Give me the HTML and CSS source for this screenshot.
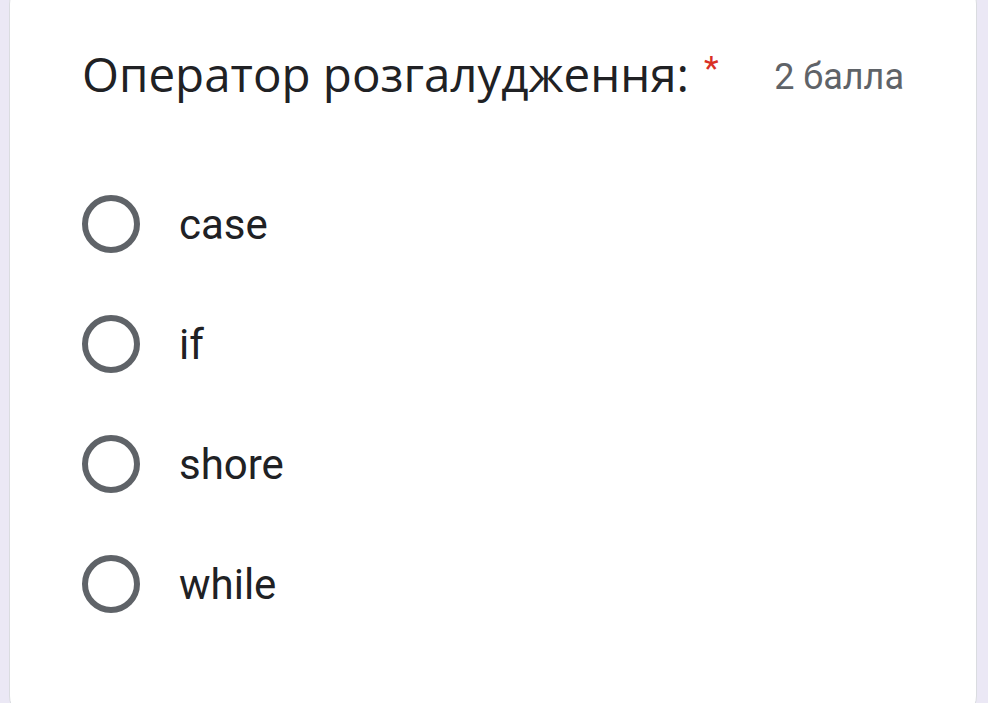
FILE: index.html
```html
<!DOCTYPE html>
<html lang="uk">
<head>
<meta charset="utf-8">
<link rel="stylesheet" href="styles.css">
</head>
<body>
<div class="card">
  <div class="header">
    <div class="title">Оператор розгалудження:<span class="req">*</span></div>
    <div class="points">2 балла</div>
  </div>
  <div class="options">
    <label class="option"><span class="radio"></span><span class="label">case</span></label>
    <label class="option"><span class="radio"></span><span class="label">if</span></label>
    <label class="option"><span class="radio"></span><span class="label">shore</span></label>
    <label class="option"><span class="radio"></span><span class="label">while</span></label>
  </div>
</div>
</body>
</html>
```
FILE: styles.css
```css
html, body {
  margin: 0;
  padding: 0;
}
body {
  background: #ebe8f5;
  height: 703px;
  overflow: hidden;
  font-family: Roboto, "Liberation Sans", sans-serif;
}
.card {
  box-sizing: border-box;
  margin: -20px 0 0 9px;
  width: 968px;
  height: 740px;
  background: #ffffff;
  border: 1px solid #dadce0;
  border-radius: 24px;
  padding: 60px 72px 0 72px;
}
.header {
  display: flex;
  align-items: baseline;
  justify-content: space-between;
}
.title {
  font-family: "Open Sans", Roboto, sans-serif;
  font-size: 47.5px;
  color: #202124;
}
.req {
  color: #d93025;
  margin-left: 15px;
  font-family: Roboto, sans-serif;
  font-size: 34px;
  position: relative;
  top: -12px;
}
.points {
  font-size: 36px;
  color: #5f6368;
  position: relative;
  top: -3px;
}
.options {
  display: flex;
  flex-direction: column;
  margin-top: 89px;
  gap: 62px;
}
.option {
  display: flex;
  align-items: center;
  gap: 39px;
  height: 58px;
}
.radio {
  box-sizing: border-box;
  width: 58px;
  height: 58px;
  border: 6px solid #5f6368;
  border-radius: 50%;
  flex: none;
}
.label {
  font-size: 42px;
  color: #202124;
}
```
